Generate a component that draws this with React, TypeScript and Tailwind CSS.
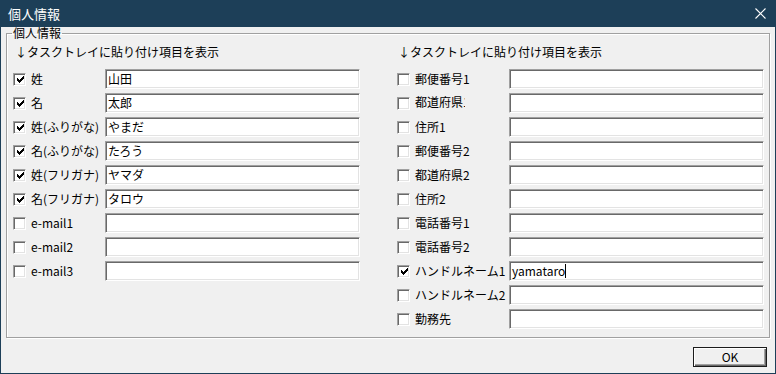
import { type ReactElement } from 'react';

type Field = { label: string; value?: string; checked?: boolean; caret?: boolean; clip?: boolean };

const leftFields: Field[] = [
    { label: '姓', value: '山田', checked: true },
    { label: '名', value: '太郎', checked: true },
    { label: '姓(ふりがな)', value: 'やまだ', checked: true },
    { label: '名(ふりがな)', value: 'たろう', checked: true },
    { label: '姓(フリガナ)', value: 'ヤマダ', checked: true },
    { label: '名(フリガナ)', value: 'タロウ', checked: true },
    { label: 'e-mail1' },
    { label: 'e-mail2' },
    { label: 'e-mail3' },
];

const rightFields: Field[] = [
    { label: '郵便番号1' },
    { label: '都道府県1', clip: true },
    { label: '住所1' },
    { label: '郵便番号2' },
    { label: '都道府県2' },
    { label: '住所2' },
    { label: '電話番号1' },
    { label: '電話番号2' },
    { label: 'ハンドルネーム1', value: 'yamataro', checked: true, caret: true },
    { label: 'ハンドルネーム2' },
    { label: '勤務先' },
];

// classic 7x7 pixel check mark, one 3px column per x
const checkCols = [2, 1, 0, 1, 2, 3, 4].map((d, x) => ({ x, y: 4 - d }));

function CheckBox({ checked }: { checked?: boolean }): ReactElement {
    return (
        <span className="w-[13px] h-[13px] shrink-0 flex items-center justify-center bg-white border border-t-[#a0a0a0] border-l-[#a0a0a0] border-r-white border-b-white shadow-[inset_1px_1px_0_#696969,inset_-1px_-1px_0_#e3e3e3]">
            {checked && (
                <svg width="7" height="7" viewBox="0 0 7 7" shapeRendering="crispEdges" className="ml-px mt-px">
                    {checkCols.map((c) => (
                        <rect key={c.x} x={c.x} y={c.y} width="1" height="3" fill="#000" />
                    ))}
                </svg>
            )}
        </span>
    );
}

function Row({ field, labelWidth }: { field: Field; labelWidth: string }): ReactElement {
    return (
        <div className="flex items-center h-[20px]">
            <CheckBox checked={field.checked} />
            <span className={`${labelWidth} shrink-0 pl-[5px] whitespace-nowrap`}>
                {field.clip ? <span className="inline-block w-[50px] h-[16px] overflow-hidden align-top">{field.label}</span> : field.label}
            </span>
            <div className="flex-1 h-[20px] flex items-center pl-[2px] bg-white border border-t-[#a0a0a0] border-l-[#a0a0a0] border-r-white border-b-white shadow-[inset_1px_1px_0_#696969,inset_-1px_-1px_0_#e3e3e3]">
                <span>{field.value}</span>
                {field.caret && <span className="w-px h-[14px] bg-black" />}
            </div>
        </div>
    );
}

export default function App(): ReactElement {
    return (
        <div
            className="w-[776px] h-[374px] flex flex-col bg-[#1d3f58] px-px pb-px text-[12px] leading-[14px] text-black"
            style={{ fontFamily: '"Noto Sans CJK JP", "Noto Sans", sans-serif' }}
        >
            <div className="h-[27px] shrink-0 flex items-center justify-between pl-[7px] pr-[9px] text-white text-[13px]">
                <span>個人情報</span>
                <svg width="11" height="11" viewBox="0 0 11 11">
                    <path d="M0.5 0.5L10.5 10.5M10.5 0.5L0.5 10.5" stroke="#fff" strokeWidth="1.1" />
                </svg>
            </div>
            <div className="flex-1 bg-[#f0f0f0] flex flex-col px-[5px]">
                <fieldset className="h-[311px] border border-[#a0a0a0] shadow-[inset_1px_1px_0_#fff,1px_1px_0_#fff] pt-[6px]">
                    <legend className="ml-[5px] px-px leading-[12px]">個人情報</legend>
                    <div className="flex">
                        <div className="w-[347px] ml-[6px] flex flex-col">
                            <div className="ml-[2px]">↓タスクトレイに貼り付け項目を表示</div>
                            <div className="flex flex-col gap-[4px] mt-[10px]">
                                {leftFields.map((f) => (
                                    <Row key={f.label} field={f} labelWidth="w-[79px]" />
                                ))}
                            </div>
                        </div>
                        <div className="w-[367px] ml-[37px] flex flex-col">
                            <div className="ml-px">↓タスクトレイに貼り付け項目を表示</div>
                            <div className="flex flex-col gap-[4px] mt-[10px]">
                                {rightFields.map((f) => (
                                    <Row key={f.label} field={f} labelWidth="w-[99px]" />
                                ))}
                            </div>
                        </div>
                    </div>
                </fieldset>
                <div className="flex justify-end mt-[9px] mr-[3px]">
                    <button className="w-[74px] h-[20px] bg-[#f0f0f0] border border-[#1b1b1b] shadow-[inset_1px_1px_0_#fff,inset_-1px_-1px_0_#696969,inset_-2px_-2px_0_#a0a0a0] flex items-center justify-center">
                        OK
                    </button>
                </div>
            </div>
        </div>
    );
}
